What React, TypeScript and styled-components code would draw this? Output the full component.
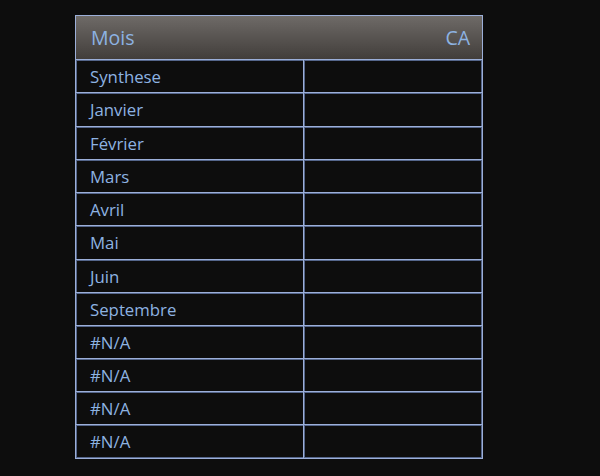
import React from "react";
import styled, { createGlobalStyle } from "styled-components";

const Global = createGlobalStyle`
  html, body { margin: 0; padding: 0; background: #0d0d0d; }
  body { font-family: "Open Sans", "Noto Sans", "Liberation Sans", sans-serif; }
`;

const line = "#9cafd8";
const lineDim = "#55668b";

const Page = styled.div`
  width: 600px;
  height: 476px;
  box-sizing: border-box;
  padding: 15px 0 0 75px;
  background: #0d0d0d;
`;

const Table = styled.div`
  width: 408px;
  box-sizing: border-box;
  border: 1px solid ${line};
  box-shadow: inset 1px 1px 0 ${lineDim}, inset -1px -1px 0 ${lineDim};
  display: flex;
  flex-direction: column;
`;

const Header = styled.div`
  height: 44px;
  box-sizing: border-box;
  border-bottom: 1px solid ${line};
  box-shadow: 0 1px 0 ${lineDim};
  background: linear-gradient(#6e6a67, #423e3b);
  display: flex;
  align-items: center;
  justify-content: space-between;
  padding: 0 12px 0 15px;
  color: #8db3e2;
  font-size: 19.5px;
`;

const Row = styled.div<{ $tall: boolean }>`
  height: ${(p) => (p.$tall ? 34 : 33)}px;
  box-sizing: border-box;
  display: grid;
  grid-template-columns: 228px 1fr;
  border-bottom: 1px solid ${line};
  box-shadow: 0 1px 0 ${lineDim};
  &:last-child { border-bottom: none; box-shadow: none; }
`;

const Cell = styled.div`
  display: flex;
  align-items: center;
  padding-left: 14px;
  color: #8db3e2;
  font-size: 16.8px;
  border-right: 1px solid ${line};
  box-shadow: 1px 0 0 ${lineDim};
`;

const Empty = styled.div``;

const months = [
  "Synthese",
  "Janvier",
  "Février",
  "Mars",
  "Avril",
  "Mai",
  "Juin",
  "Septembre",
  "#N/A",
  "#N/A",
  "#N/A",
  "#N/A",
];

export default function App() {
  return (
    <Page>
      <Global />
      <Table>
        <Header>
          <span>Mois</span>
          <span>CA</span>
        </Header>
        {months.map((m, i) => (
          <Row key={i} $tall={i === 1 || i === 5}>
            <Cell>{m}</Cell>
            <Empty />
          </Row>
        ))}
      </Table>
    </Page>
  );
}
